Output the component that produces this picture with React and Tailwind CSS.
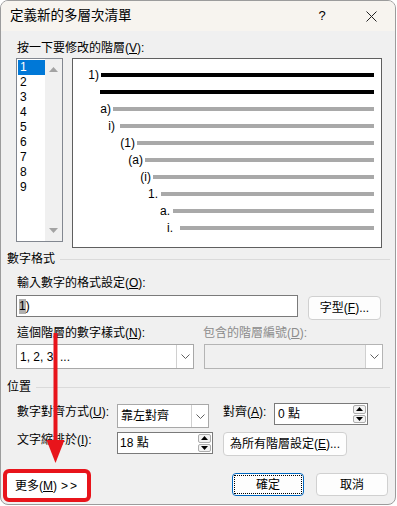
import React from "react";

function Chevron() {
  return (
    <svg width="9" height="5" viewBox="0 0 9 5">
      <path d="M0.5 0.5 L4.5 4.5 L8.5 0.5" fill="none" stroke="#606060" strokeWidth="1" />
    </svg>
  );
}

function Spin() {
  return (
    <div className="flex flex-col w-[15px] h-full gap-[1px] p-[1px]">
      <div className="flex-1 flex items-center justify-center bg-[#f3f3f3] border border-[#adadad] rounded-[2px]">
        <svg width="7" height="4" viewBox="0 0 7 4"><path d="M3.5 0 L7 4 L0 4Z" fill="#000" /></svg>
      </div>
      <div className="flex-1 flex items-center justify-center bg-[#f3f3f3] border border-[#adadad] rounded-[2px]">
        <svg width="7" height="4" viewBox="0 0 7 4"><path d="M0 0 L7 0 L3.5 4Z" fill="#000" /></svg>
      </div>
    </div>
  );
}

function PreviewRow({ w, pr, label, black }) {
  return (
    <div className="flex items-center h-[17px]">
      <div className="flex justify-end shrink-0" style={{ width: w, paddingRight: pr }}>
        <span className="text-[12px] leading-[14px] text-black">{label}</span>
      </div>
      <div className={`flex-1 mr-[7px] h-[4px] ${black ? "bg-black" : "bg-[#a9a9a9]"}`} />
    </div>
  );
}

export default function App() {
  const rows = [
    { w: 28, pr: 2, label: "1)", black: true },
    { w: 27, pr: 0, label: "", black: true },
    { w: 40, pr: 2, label: "a)" },
    { w: 47, pr: 5, label: "i)" },
    { w: 64, pr: 2, label: "(1)" },
    { w: 72, pr: 2, label: "(a)" },
    { w: 80, pr: 2, label: "(i)" },
    { w: 88, pr: 3, label: "1." },
    { w: 100, pr: 3, label: "a." },
    { w: 107, pr: 7, label: "i." },
  ];
  return (
    <div className="w-[397px] h-[506px] bg-white relative font-['Liberation_Sans','Noto_Sans_CJK_TC',sans-serif] text-[12px] leading-[16px] text-black">
      <div className="w-[396px] h-[505px] border border-[#9c9c9c] rounded-[8px] overflow-hidden flex flex-col bg-[#f0f0f0]">
        {/* title bar */}
        <div className="h-[30px] shrink-0 bg-[#f7f4ef] flex items-center pl-[9px]">
          <span className="text-[13.5px] leading-[18px] text-black">定義新的多層次清單</span>
          <div className="flex-1" />
          <span className="text-[13px] w-[14px] text-center mr-[37px]">?</span>
          <svg width="11" height="11" viewBox="0 0 11 11" className="mr-[18px]">
            <path d="M0.5 0.5 L10.5 10.5 M10.5 0.5 L0.5 10.5" stroke="#222" strokeWidth="1" />
          </svg>
        </div>

        {/* label */}
        <div className="mt-[9px] h-[16px] pl-[16px]">
          按一下要修改的階層(<u>V</u>):
        </div>

        {/* list + preview */}
        <div className="mt-[2px] flex items-start">
          <div className="ml-[15px] w-[47px] h-[184px] border border-[#828790] bg-white flex">
            <div className="w-[28px] pt-[1px] pl-[1px]">
              {["1", "2", "3", "4", "5", "6", "7", "8", "9"].map((n, i) => (
                <div
                  key={n}
                  className={`h-[15px] leading-[15px] pl-[2px] ${i === 0 ? "bg-[#0078d7] text-white" : ""}`}
                >
                  {n}
                </div>
              ))}
            </div>
            <div className="flex-1 bg-[#f0f0f0] flex flex-col items-center justify-between pt-[8px] pb-[8px]">
              <svg width="9" height="5" viewBox="0 0 9 5"><path d="M4.5 0 L9 5 L0 5Z" fill="#a3a3a3" /></svg>
              <svg width="9" height="5" viewBox="0 0 9 5"><path d="M0 0 L9 0 L4.5 5Z" fill="#a3a3a3" /></svg>
            </div>
          </div>
          <div className="ml-[9px] w-[310px] h-[190px] border border-[#5f5f5f] bg-white pt-[7px]">
            {rows.map((r, i) => (
              <PreviewRow key={i} {...r} />
            ))}
          </div>
        </div>

        {/* 數字格式 */}
        <div className="mt-[3px] h-[16px] flex items-center pl-[6px]">
          <span>數字格式</span>
          <div className="flex-1 h-px bg-[#dadada] ml-[5px] mr-[5px]" />
        </div>
        <div className="mt-[8px] h-[16px] pl-[16px]">
          輸入數字的格式設定(<u>O</u>):
        </div>
        <div className="mt-[4px] flex items-start pl-[15px]">
          <div className="w-[282px] h-[22px] border border-[#7a7a7a] bg-white flex items-center pl-[2px]">
            <span className="bg-[#b0b0b0] leading-[15px]">1</span>
            <span>)</span>
          </div>
          <button className="ml-[10px] mt-[1px] w-[73px] h-[24px] bg-[#fdfdfd] border border-[#d0d0d0] rounded-[4px] text-[12px] leading-[16px]">
            字型(<u>F</u>)...
          </button>
        </div>
        <div className="mt-[5px] h-[16px] flex pl-[16px]">
          <span className="w-[186px]">這個階層的數字樣式(<u>N</u>):</span>
          <span className="text-[#8c8c8c]">包含的階層編號(<u>D</u>):</span>
        </div>
        <div className="mt-[3px] flex pl-[15px]">
          <div className="w-[178px] h-[25px] border border-[#a8a8a8] bg-white flex items-center">
            <span className="flex-1 pl-[3px]">1, 2, 3, ...</span>
            <div className="w-[17px] h-full border-l border-[#d0d0d0] flex items-center justify-center">
              <Chevron />
            </div>
          </div>
          <div className="ml-[10px] w-[179px] h-[25px] border border-[#b4b4b4] bg-[#f0f0f0] flex items-center">
            <span className="flex-1" />
            <div className="w-[17px] h-full bg-white border-l border-[#d0d0d0] flex items-center justify-center">
              <Chevron />
            </div>
          </div>
        </div>

        {/* 位置 */}
        <div className="mt-[10px] h-[16px] flex items-center pl-[6px]">
          <span>位置</span>
          <div className="flex-1 h-px bg-[#dadada] ml-[5px] mr-[5px]" />
        </div>
        <div className="mt-[8px] flex items-start pl-[16px] h-[25px]">
          <span className="w-[100px] mt-[1px]">數字對齊方式(<u>U</u>):</span>
          <div className="mt-[1px] w-[92px] h-[24px] border border-[#a8a8a8] bg-white flex items-center">
            <span className="flex-1 pl-[3px]">靠左對齊</span>
            <div className="w-[17px] h-full border-l border-[#d0d0d0] flex items-center justify-center">
              <Chevron />
            </div>
          </div>
          <span className="ml-[14px] w-[51px] mt-[1px]">對齊(<u>A</u>):</span>
          <div className="w-[94px] h-[22px] border border-[#7a7a7a] bg-white flex items-center">
            <span className="flex-1 pl-[3px]">0 點</span>
            <Spin />
          </div>
        </div>
        <div className="mt-[4px] flex items-start pl-[16px] h-[24px]">
          <span className="w-[100px]">文字縮排於(<u>I</u>):</span>
          <div className="w-[96px] h-[22px] border border-[#7a7a7a] bg-white flex items-center">
            <span className="flex-1 pl-[2px]">18 點</span>
            <Spin />
          </div>
          <button className="ml-[10px] w-[124px] h-[24px] bg-[#fdfdfd] border border-[#d0d0d0] rounded-[4px] text-[12px] leading-[16px]">
            為所有階層設定(<u>E</u>)...
          </button>
        </div>

        {/* bottom buttons */}
        <div className="mt-[13px] flex items-start">
          <div className="ml-[2px] w-[88px] h-[33px] border-[4px] border-[#e8141b] rounded-[6px] bg-white flex items-center pl-[8px]">
            更多(<u>M</u>)<span className="ml-[4px] tracking-[2px]">&gt;&gt;</span>
          </div>
          <button className="ml-[141px] mt-[4px] w-[72px] h-[23px] bg-[#fdfdfd] border border-[#0067c0] rounded-[4px] p-[1px] text-[12px] leading-[16px]">
            <div className="w-full h-full border border-dotted border-black flex items-center justify-center">確定</div>
          </button>
          <button className="ml-[12px] mt-[4px] w-[72px] h-[23px] bg-[#fdfdfd] border border-[#d0d0d0] rounded-[4px] text-[12px] leading-[16px]">
            取消
          </button>
        </div>
      </div>

      {/* red arrow annotation */}
      <svg className="absolute left-0 top-0 pointer-events-none" width="397" height="506" viewBox="0 0 397 506">
        <rect x="53.5" y="333" width="4" height="110" fill="#e8141b" />
        <path d="M46.5 440 L64.5 440 L55.5 463 Z" fill="#e8141b" />
      </svg>
    </div>
  );
}
